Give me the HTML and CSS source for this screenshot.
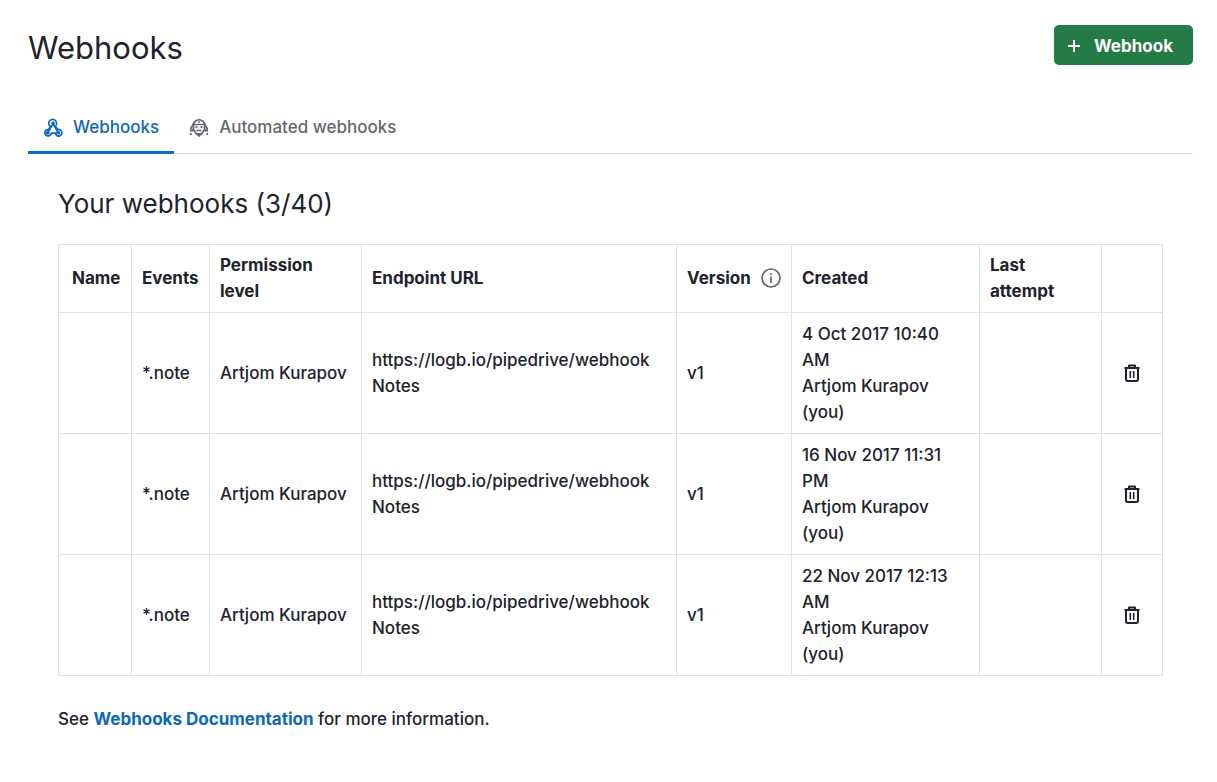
FILE: index.html
```html
<!DOCTYPE html>
<html lang="en">
<head>
<meta charset="utf-8">
<title>Webhooks</title>
<link rel="stylesheet" href="styles.css">
</head>
<body>
<svg class="sprite" aria-hidden="true">
  <symbol id="trash" viewBox="0 0 20 20">
    <g fill="none" stroke="currentColor" stroke-width="2" stroke-linejoin="round">
      <path d="M2.500 5h15M7 5V2.500h6V5M4 5V16Q4 18 5.600 18H14.400Q16 18 16 16V5"/>
      <path d="M8.300 8v7M11.700 8v7" stroke-width="1.600"/>
    </g>
  </symbol>
</svg>
<main class="page">
  <header class="page-header">
    <h1 class="page-title">Webhooks</h1>
    <button class="add-button" type="button">
      <svg class="plus-icon" viewBox="0 0 14 14" aria-hidden="true"><path d="M7 1v12M1 7h12" stroke="currentColor" stroke-width="2"/></svg>
      Webhook
    </button>
  </header>

  <nav class="tabs">
    <a class="tab tab-active" href="#webhooks" aria-current="page">
      <svg class="tab-icon" viewBox="0 0 20 20" aria-hidden="true">
        <g fill="none" stroke="currentColor" stroke-width="1.700" stroke-linecap="round" stroke-linejoin="round">
          <path d="M6.600 9A4 4 0 1 1 13.500 7.600"/>
          <path d="M6.600 9L7.300 9.700L5.200 13.200M10 6.600L14.600 14.500"/>
          <path d="M12.200 8.800L14.600 12.700A3.200 3.200 0 1 1 12.800 17.300"/>
          <path d="M5 12.500A3.200 3.200 0 1 0 8.200 16.200H15M9.200 8.200L5.200 15.200"/>
          <circle cx="10" cy="6.300" r="1"/><circle cx="4.800" cy="15.700" r="1"/><circle cx="15.300" cy="15.700" r="1"/>
        </g>
      </svg>
      Webhooks
    </a>
    <a class="tab" href="#automated">
      <svg class="tab-icon" viewBox="0 0 20 20" aria-hidden="true">
        <g fill="none" stroke="currentColor" stroke-width="1.700" stroke-linejoin="round">
          <path d="M4.300 7Q5 4 10 2.500Q15 4 15.700 7M3 7.500H17M4.500 7.500V12.500L7.500 17H12.500L15.500 12.500V7.500"/>
          <path d="M9 5H11M6.500 10.200H8.500M11.500 10.200H13.500M7.500 13.500H12.500"/>
          <path d="M3.500 8.500L1.800 11.500V14.500M16.500 8.500L18.200 11.500V14.500M4.500 12L2.800 14.500M15.500 12L17.200 14.500M1.800 16V18M18.200 16V18"/>
        </g>
        <path d="M7 16H13L11.500 19L10 20L8.500 19Z" fill="currentColor"/>
      </svg>
      Automated webhooks
    </a>
  </nav>

  <section class="content">
    <h2 class="section-title">Your webhooks (3/40)</h2>
    <table class="hooks">
      <colgroup>
        <col class="col-name"><col class="col-events"><col class="col-permission"><col class="col-url">
        <col class="col-version"><col class="col-created"><col class="col-attempt"><col class="col-action">
      </colgroup>
      <thead>
        <tr>
          <th class="name-head" scope="col">Name</th><th scope="col">Events</th><th scope="col">Permission level</th><th scope="col">Endpoint URL</th>
          <th scope="col"><span class="version-head">Version
            <svg class="info-icon" viewBox="0 0 20 20" aria-hidden="true"><circle cx="10" cy="10" r="9" fill="none" stroke="currentColor" stroke-width="1.700"/><path d="M10 8.500V15M10 5.200V7" stroke="currentColor" stroke-width="1.700"/></svg></span></th>
          <th scope="col">Created</th><th scope="col">Last attempt</th><td></td>
        </tr>
      </thead>
      <tbody>
        <tr>
          <td></td><td>*.note</td><td class="owner">Artjom Kurapov</td><td>https://logb.io/pipedrive/webhook<br>Notes</td><td>v1</td>
          <td><div class="created">4 Oct 2017 10:40 AM<br>Artjom Kurapov (you)</div></td><td></td>
          <td><button class="delete-button" type="button" aria-label="Delete webhook"><svg class="trash-icon"><use href="#trash"/></svg></button></td>
        </tr>
        <tr>
          <td></td><td>*.note</td><td class="owner">Artjom Kurapov</td><td>https://logb.io/pipedrive/webhook<br>Notes</td><td>v1</td>
          <td><div class="created">16 Nov 2017 11:31 PM<br>Artjom Kurapov (you)</div></td><td></td>
          <td><button class="delete-button" type="button" aria-label="Delete webhook"><svg class="trash-icon"><use href="#trash"/></svg></button></td>
        </tr>
        <tr>
          <td></td><td>*.note</td><td class="owner">Artjom Kurapov</td><td>https://logb.io/pipedrive/webhook<br>Notes</td><td>v1</td>
          <td><div class="created">22 Nov 2017 12:13 AM<br>Artjom Kurapov (you)</div></td><td></td>
          <td><button class="delete-button" type="button" aria-label="Delete webhook"><svg class="trash-icon"><use href="#trash"/></svg></button></td>
        </tr>
      </tbody>
    </table>
    <p class="note">See <a class="doc-link" href="#docs">Webhooks Documentation</a> for more information.</p>
  </section>
</main>
</body>
</html>
```
FILE: styles.css
```css
* { box-sizing: border-box; }
body {
  margin: 0;
  background: #fff;
  color: #21232c;
  font: 500 17px/26px Inter, "Liberation Sans", sans-serif;
  font-optical-sizing: none;
}
.sprite { display: none; }
.page { padding: 24px 24px 32px 28px; }
.page-header {
  display: flex;
  justify-content: space-between;
  align-items: flex-start;
}
.page-title {
  margin: 0;
  font-size: 31px;
  line-height: 48px;
  font-weight: 400;
  font-optical-sizing: auto;
}
.add-button {
  display: flex;
  align-items: center;
  gap: 13px;
  height: 40px;
  margin-top: 1px;
  padding: 1px 20px 0 13px;
  border: 0;
  border-radius: 5px;
  background: #257b45;
  color: #fff;
  font: inherit;
  font-weight: 700;
}
.plus-icon { width: 14px; height: 14px; }
.tabs {
  display: flex;
  margin-top: 28px;
  border-bottom: 1px solid #e1e2e3;
}
.tab {
  display: flex;
  align-items: center;
  gap: 10px;
  height: 54px;
  margin-bottom: -1px;
  padding: 3px 15px 0;
  border-bottom: 3px solid transparent;
  color: #656770;
  text-decoration: none;
}
.tab-active {
  border-bottom-color: #0a70cb;
  color: #0b68be;
}
.tab-icon { width: 20px; height: 20px; }
.content { padding: 30px 30px 0; }
.section-title {
  margin: 0 0 20px;
  font-size: 26px;
  line-height: 40px;
  font-weight: 400;
  font-optical-sizing: auto;
}
.hooks {
  width: 100%;
  border-collapse: collapse;
  table-layout: fixed;
}
.hooks th, .hooks td {
  padding: 8px 10px;
  border: 1px solid #e1e2e3;
  text-align: left;
  vertical-align: middle;
}
.hooks th { padding-top: 7px; font-weight: 700; }
.hooks .name-head { padding-left: 13px; padding-right: 0; }
.col-name { width: 73px; }
.col-events { width: 78px; }
.col-permission { width: 152px; }
.col-version { width: 115px; }
.col-created { width: 188px; }
.col-attempt { width: 122px; }
.col-action { width: 61px; }
.owner { white-space: nowrap; }
.created { max-width: 160px; }
.version-head {
  display: flex;
  align-items: center;
  justify-content: space-between;
}
.info-icon { width: 20px; height: 20px; color: #656770; }
.delete-button {
  display: flex;
  margin: 0 auto;
  padding: 0;
  border: 0;
  background: none;
  color: #21232c;
}
.trash-icon { width: 20px; height: 20px; }
.note { margin: 30px 0 0; }
.doc-link {
  color: #0b68be;
  font-weight: 700;
  text-decoration: none;
}
```
